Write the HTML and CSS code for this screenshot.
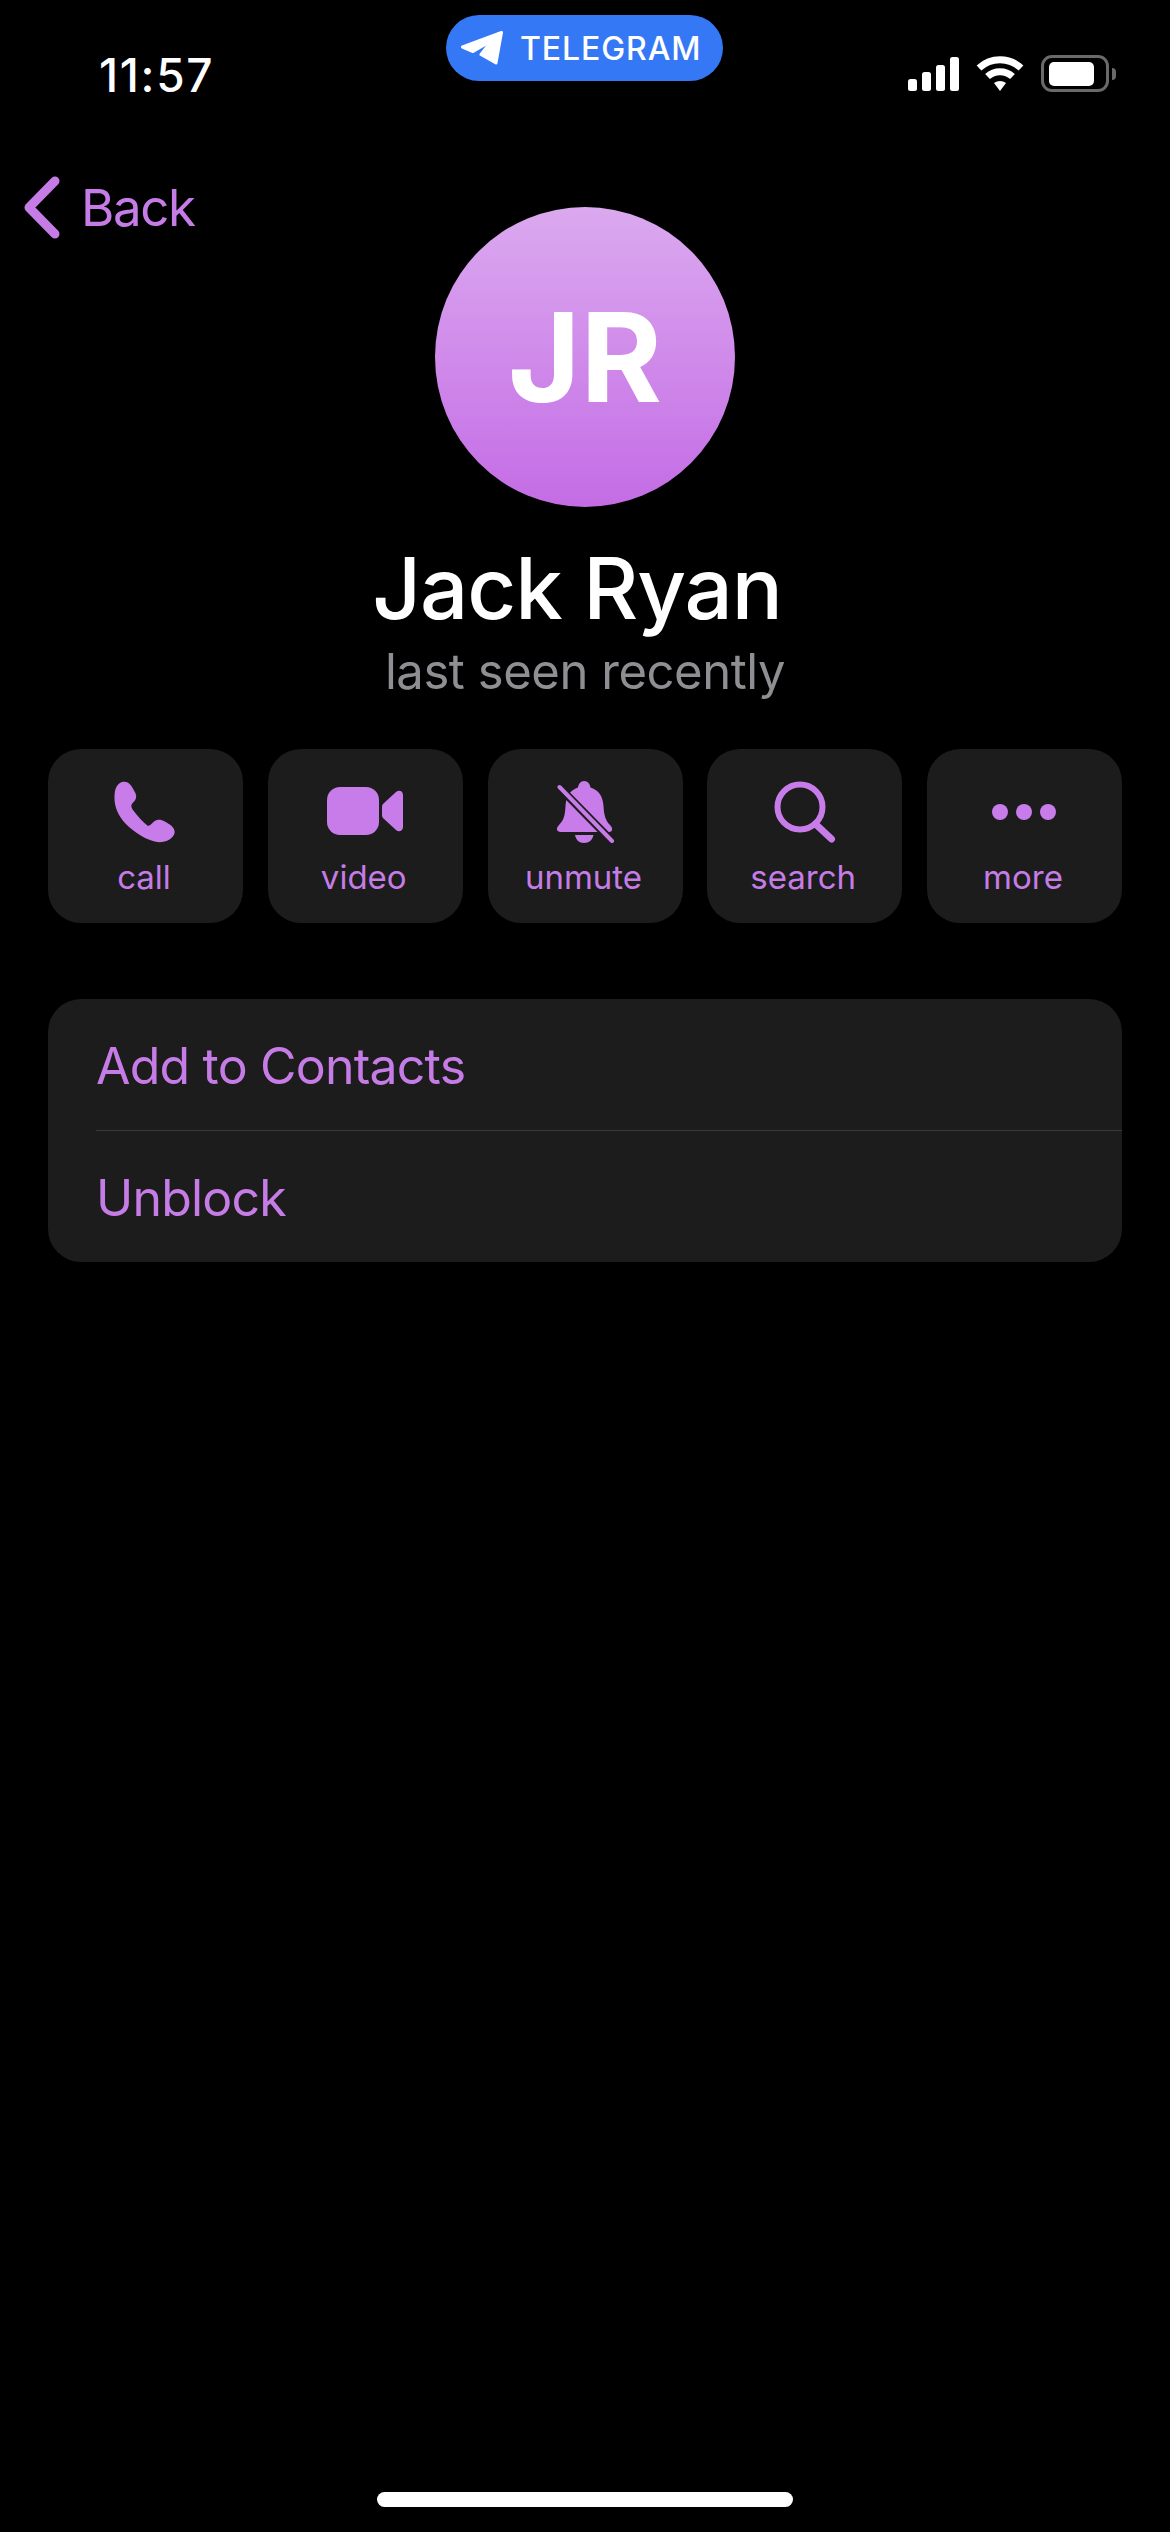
FILE: index.html
```html
<!DOCTYPE html>
<html lang="en">
<head>
    <title>Jack Ryan</title>
    <link rel="stylesheet" href="styles.css">
</head>
<body>
    <div class="screen">
        <div class="status-bar">
            <span class="clock">11:57</span>

            <div class="app-pill">
                <svg class="plane" viewBox="0 0 42 34">
                    <path d="M1.5 16 L40.5 1.5 L35 32 L20 23.5 L31 9.5 L12 20.5 Z" fill="#fff" stroke="#fff" stroke-width="3" stroke-linejoin="round"/>
                </svg>
                <span>TELEGRAM</span>
            </div>

            <div class="status-icons">
                <svg class="signal" viewBox="0 0 51 34">
                    <rect x="0" y="22" width="9" height="12" rx="2.5" fill="#fff"/>
                    <rect x="14" y="15" width="9" height="19" rx="2.5" fill="#fff"/>
                    <rect x="28" y="8" width="9" height="26" rx="2.5" fill="#fff"/>
                    <rect x="42" y="0" width="9" height="34" rx="2.5" fill="#fff"/>
                </svg>
                <svg class="wifi" viewBox="0 0 48 36">
                    <path d="M3 13 C15 2 33 2 45 13" fill="none" stroke="#fff" stroke-width="7"/>
                    <path d="M11.5 21.5 C18.5 15 29.5 15 36.5 21.5" fill="none" stroke="#fff" stroke-width="7"/>
                    <path d="M18 28 C21.5 25.2 26.5 25.2 30 28 L24 36 Z" fill="#fff"/>
                </svg>
                <div class="battery">
                    <div class="battery-level"></div>
                </div>
                <div class="battery-nub"></div>
            </div>
        </div>

        <div class="profile-head">
            <a class="back-link">
                <svg class="chevron" viewBox="0 0 36 63">
                    <path d="M31 5 L5 31.5 L31 58" fill="none" stroke="#c67ce6" stroke-width="9" stroke-linecap="round" stroke-linejoin="round"/>
                </svg>
                <span>Back</span>
            </a>
            <div class="avatar">JR</div>
        </div>

        <h1 class="name">Jack Ryan</h1>
        <p class="last-seen">last seen recently</p>

        <div class="actions">
            <div class="action">
                <svg class="action-icon phone-icon" viewBox="0 0 183 183">
                    <path d="M22 2 C40 -3 50 7 60 27 C70 42 68 52 58 62 C50 70 50 77 58 87 C70 102 85 120 100 132 C108 135 112 127 120 120 C130 112 142 114 152 120 C168 129 182 137 182 152 C180 170 158 182 135 182 C100 180 60 152 35 127 C12 102 -2 72 2 37 C3 20 10 7 22 2 Z" fill="#c87ce9"/>
                </svg>
                <span>call</span>
            </div>
            <div class="action">
                <svg class="action-icon video-icon" viewBox="0 0 76 62">
                    <rect x="0" y="6" width="52" height="48" rx="13" fill="#c87ce9"/>
                    <path d="M55 26 C55 24.500 55.500 23.500 56.500 22.500 L69 11 C72 8.500 76 10 76 14 L76 46 C76 50 72 51.500 69 49 L56.500 37.500 C55.500 36.500 55 35.500 55 34 Z" fill="#c87ce9"/>
                </svg>
                <span>video</span>
            </div>
            <div class="action">
                <svg class="action-icon bell-icon" viewBox="0 0 60 62">
                    <path d="M29 0 C33 0 35 3 35.500 6.500 C44 9 48 16 48.500 25 C49 35 51 40 55 44 C58 47 58 51 54 51 L6 51 C1 51 1 47 4 44 C9 39 10 34 10.500 25 C11 16 15 9 23 6.500 C23.500 3 25.500 0 29 0 Z" fill="#c87ce9"/>
                    <path d="M20 54 H38.500 C37.500 59 34 62 29 62 C24 62 21 59 20 54 Z" fill="#c87ce9"/>
                    <path d="M4 6 L57 60" fill="none" stroke="#1c1c1c" stroke-width="8" stroke-linecap="round"/>
                    <path d="M4.500 6 L57 60" fill="none" stroke="#c87ce9" stroke-width="4" stroke-linecap="round"/>
                </svg>
                <span>unmute</span>
            </div>
            <div class="action">
                <svg class="action-icon search-icon" viewBox="0 0 62 62">
                    <circle cx="26" cy="26" r="22.500" fill="none" stroke="#c87ce9" stroke-width="6"/>
                    <path d="M41.500 43 L57.500 58" fill="none" stroke="#c87ce9" stroke-width="7" stroke-linecap="round"/>
                </svg>
                <span>search</span>
            </div>
            <div class="action">
                <div class="action-icon more-dots">
                    <i></i><i></i><i></i>
                </div>
                <span>more</span>
            </div>
        </div>

        <div class="card">
            <div class="card-row">Add to Contacts</div>
            <div class="card-row">Unblock</div>
        </div>

        <div class="home-bar"></div>
    </div>
</body>
</html>
```

FILE: styles.css
```css
body {
    margin: 0;
    background-color: #000;
    font-family: Inter, "Liberation Sans", sans-serif;
}

.screen {
    display: flex;
    flex-direction: column;
    position: relative;
    width: 1170px;
    height: 2532px;
    overflow: hidden;
}

.status-bar {
    display: flex;
    justify-content: space-between;
    height: 112px;
    flex-shrink: 0;
}

.clock {
    margin: 48px 0 0 99px;
    color: #fff;
    font-size: 46px;
    line-height: 54px;
    font-weight: 500;
    letter-spacing: 1.7px;
}

.app-pill {
    position: absolute;
    top: 15px;
    left: 446px;
    display: flex;
    align-items: center;
    width: 277px;
    height: 66px;
    border-radius: 33px;
    background-color: #3478f6;
    color: #fff;
    font-size: 32px;
    font-weight: 500;
    letter-spacing: 0.9px;
}

.plane {
    width: 42px;
    height: 34px;
    margin: 0 17px 0 15px;
}

.status-icons {
    display: flex;
    align-items: flex-end;
    height: 37px;
    margin: 55px 54px 0 0;
}

.signal {
    width: 51px;
    height: 34px;
    margin: 0 17px 1px 0;
}

.wifi {
    width: 48px;
    height: 36px;
    margin: 0 17px 1px 0;
}

.battery {
    box-sizing: border-box;
    width: 68px;
    height: 37px;
    padding: 4px 5px;
    border: 3px solid #6a6a6a;
    border-radius: 11px;
}

.battery-level {
    width: 45px;
    height: 24px;
    border-radius: 5px;
    background-color: #fff;
}

.battery-nub {
    width: 4px;
    height: 12px;
    margin: 0 0 12px 3px;
    border-radius: 0 4px 4px 0;
    background-color: #6a6a6a;
}

.profile-head {
    display: grid;
    grid-template-columns: 1fr 300px 1fr;
    padding-top: 64px;
}

.back-link {
    display: flex;
    align-items: center;
    align-self: start;
    height: 63px;
    padding-left: 24px;
    color: #c67ce6;
    font-size: 51px;
    letter-spacing: -1.4px;
}

.chevron {
    width: 36px;
    height: 63px;
    margin-right: 21px;
}

.avatar {
    display: flex;
    align-items: center;
    justify-content: center;
    height: 300px;
    margin-top: 31px;
    border-radius: 50%;
    background: linear-gradient(#dba9ef, #c46ce5);
    color: #fff;
    font-size: 124px;
    font-weight: 700;
}

.name {
    margin: 30px 16px 0 0;
    color: #fff;
    text-align: center;
    font-size: 85px;
    line-height: 104px;
    font-weight: 500;
    letter-spacing: -1.1px;
}

.last-seen {
    margin: 1px 0 0;
    color: #8e8e93;
    text-align: center;
    font-size: 49px;
    line-height: 60px;
    letter-spacing: -0.45px;
}

.actions {
    display: flex;
    justify-content: space-between;
    margin: 47px 48px 0;
}

.action {
    display: flex;
    flex-direction: column;
    align-items: center;
    box-sizing: border-box;
    width: 195px;
    height: 174px;
    padding-top: 32px;
    border-radius: 33px;
    background-color: #1c1c1c;
    color: #c67ce6;
    font-size: 33px;
    line-height: 40px;
}

.action span {
    margin-right: 3px;
}

.action-icon {
    height: 62px;
    margin-bottom: 14px;
}

.phone-icon {
    width: 61px;
    margin-right: 3px;
}

.video-icon {
    width: 76px;
}

.bell-icon {
    width: 60px;
}

.search-icon {
    width: 62px;
}

.more-dots {
    display: flex;
    align-items: center;
    gap: 8px;
    margin-right: 2px;
}

.more-dots i {
    width: 16px;
    height: 16px;
    border-radius: 50%;
    background-color: #c87ce9;
}

.card {
    margin: 76px 48px 0;
    border-radius: 33px;
    background-color: #1c1c1c;
}

.card-row {
    height: 131px;
    margin-left: 48px;
    color: #c67ce6;
    font-size: 50px;
    line-height: 134px;
    letter-spacing: -0.8px;
}

.card-row + .card-row {
    border-top: 1px solid #3a3a3c;
}

.home-bar {
    align-self: center;
    width: 416px;
    height: 15px;
    margin-top: auto;
    margin-bottom: 25px;
    border-radius: 8px;
    background-color: #fff;
}
```
